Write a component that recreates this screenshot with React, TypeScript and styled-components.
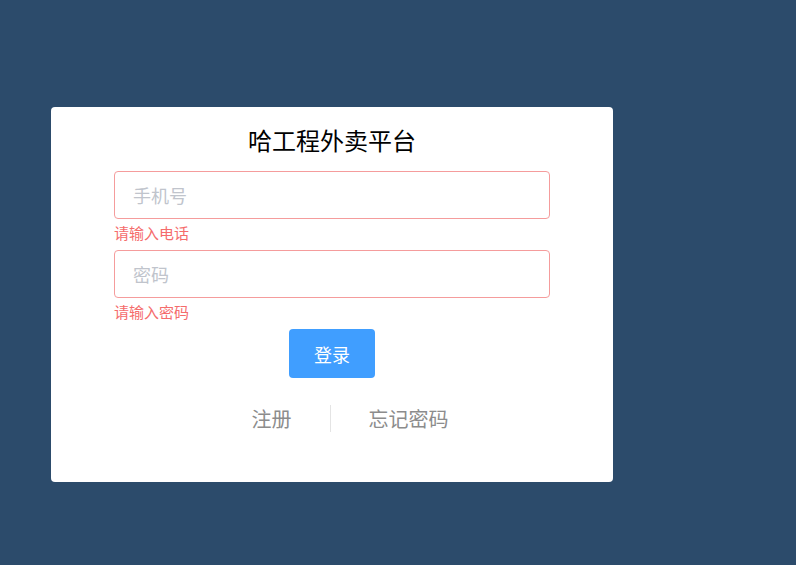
import React from 'react'
import styled, { createGlobalStyle } from 'styled-components'

const GlobalStyle = createGlobalStyle`
  html, body {
    margin: 0;
    padding: 0;
    height: 100%;
    background: #2c4b6b;
    font-family: "Noto Sans CJK SC", "Noto Sans", sans-serif;
  }
  #root {
    min-height: 100%;
  }
`

const Page = styled.div`
  min-height: 565px;
  padding: 107px 0 0 51px;
  box-sizing: border-box;
`

const Card = styled.div`
  width: 562px;
  height: 375px;
  box-sizing: border-box;
  background: #ffffff;
  border-radius: 4px;
  padding: 15px 63px 0;
  display: flex;
  flex-direction: column;
`

const Title = styled.h1`
  margin: 0 0 13px;
  font-size: 24px;
  font-weight: 400;
  line-height: 36px;
  color: #000000;
  text-align: center;
`

const Input = styled.input`
  width: 436px;
  height: 48px;
  box-sizing: border-box;
  border: 1px solid #f59c9c;
  border-radius: 4px;
  padding: 0 18px;
  font-family: inherit;
  font-size: 18px;
  color: #606266;
  outline: none;

  &::placeholder {
    color: #c0c4cc;
  }
`

const ErrorText = styled.div`
  height: 31px;
  box-sizing: border-box;
  padding-top: 5px;
  font-size: 15px;
  line-height: 18px;
  color: #f56c6c;
`

const SubmitButton = styled.button`
  align-self: center;
  width: 86px;
  height: 49px;
  border: none;
  border-radius: 4px;
  background: #409eff;
  color: #ffffff;
  font-family: inherit;
  font-size: 18px;
  cursor: pointer;
`

const LinkRow = styled.div`
  margin-top: 27px;
  padding-left: 36px;
  display: flex;
  justify-content: center;
  align-items: center;
  height: 27px;
`

const TextLink = styled.a`
  font-size: 20px;
  color: #8c8c8c;
  text-decoration: none;
  cursor: pointer;
`

const Divider = styled.span`
  width: 1px;
  height: 27px;
  background: #e4e4e4;
  margin: 0 38px;
`

export default function App() {
  return (
    <>
      <GlobalStyle />
      <Page>
        <Card>
          <Title>哈工程外卖平台</Title>
          <Input placeholder="手机号" />
          <ErrorText>请输入电话</ErrorText>
          <Input type="password" placeholder="密码" />
          <ErrorText>请输入密码</ErrorText>
          <SubmitButton>登录</SubmitButton>
          <LinkRow>
            <TextLink>注册</TextLink>
            <Divider />
            <TextLink>忘记密码</TextLink>
          </LinkRow>
        </Card>
      </Page>
    </>
  )
}
